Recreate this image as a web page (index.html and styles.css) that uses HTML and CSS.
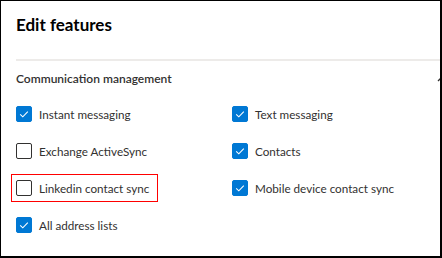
FILE: index.html
```html
<!DOCTYPE html>
<html lang="en">
<head>
  <meta charset="UTF-8">
  <title>Edit features</title>
  <link rel="stylesheet" href="styles.css">
</head>
<body>
  <div class="frame">
    <div class="panel">
      <h1 class="title">Edit features</h1>
      <div class="divider"></div>
      <div class="section-head">
        <span>Communication management</span>
        <svg class="chevron" width="12" height="8" viewBox="0 0 12 8">
          <path d="M1 7 L6 2 L11 7" fill="none" stroke="#323130" stroke-width="1.3"/>
        </svg>
      </div>
      <div class="options">
        <label class="option"><span class="box checked"><svg width="16" height="16" viewBox="0 0 16 16"><path d="M4.2 8.3 L6.8 10.8 L11.8 5.6" fill="none" stroke="#fff" stroke-width="1.1"/></svg></span>Instant messaging</label>
        <label class="option"><span class="box checked"><svg width="16" height="16" viewBox="0 0 16 16"><path d="M4.2 8.3 L6.8 10.8 L11.8 5.6" fill="none" stroke="#fff" stroke-width="1.1"/></svg></span>Text messaging</label>
        <label class="option"><span class="box"></span>Exchange ActiveSync</label>
        <label class="option"><span class="box checked"><svg width="16" height="16" viewBox="0 0 16 16"><path d="M4.2 8.3 L6.8 10.8 L11.8 5.6" fill="none" stroke="#fff" stroke-width="1.1"/></svg></span>Contacts</label>
        <label class="option highlight"><span class="box"></span>Linkedin contact sync</label>
        <label class="option"><span class="box checked"><svg width="16" height="16" viewBox="0 0 16 16"><path d="M4.2 8.3 L6.8 10.8 L11.8 5.6" fill="none" stroke="#fff" stroke-width="1.1"/></svg></span>Mobile device contact sync</label>
        <label class="option"><span class="box checked"><svg width="16" height="16" viewBox="0 0 16 16"><path d="M4.2 8.3 L6.8 10.8 L11.8 5.6" fill="none" stroke="#fff" stroke-width="1.1"/></svg></span>All address lists</label>
      </div>
    </div>
  </div>
</body>
</html>
```

FILE: styles.css
```css
body {
  margin: 0;
  font-family: 'Lato', 'Open Sans', sans-serif;
  color: #323130;
  background: #fff;
}
.frame {
  width: 442px;
  height: 258px;
  box-sizing: border-box;
  border-style: solid;
  border-color: #000;
  border-width: 1px 2px 2px 1px;
  overflow: hidden;
}
.panel {
  padding-left: 15px;
}
.title {
  margin: 0;
  padding-top: 14px;
  height: 44px;
  font-size: 17px;
  font-weight: 700;
  color: #000;
  line-height: 20px;
}
.divider {
  height: 2px;
  background: #edebe9;
}
.section-head {
  display: flex;
  justify-content: space-between;
  align-items: center;
  height: 34px;
  font-size: 12px;
  font-weight: 600;
  color: #323130;
}
.chevron {
  margin-right: -9px;
}
.options {
  display: grid;
  grid-template-columns: 216px 200px;
  grid-auto-rows: 37px;
}
.option {
  display: flex;
  align-items: center;
  gap: 7px;
  font-size: 11.7px;
  color: #323130;
}
.box {
  width: 16px;
  height: 16px;
  box-sizing: border-box;
  border: 1px solid #323130;
  border-radius: 2px;
  display: flex;
}
.box.checked {
  background: #0078d4;
  border-color: #0078d4;
}
.box.checked svg {
  margin: -1px;
}
.option.highlight {
  justify-self: start;
  margin-left: -5px;
  padding: 0 8px 0 4px;
  height: 28px;
  align-self: center;
  box-sizing: border-box;
  border: 1.5px solid #ff0000;
}
```
